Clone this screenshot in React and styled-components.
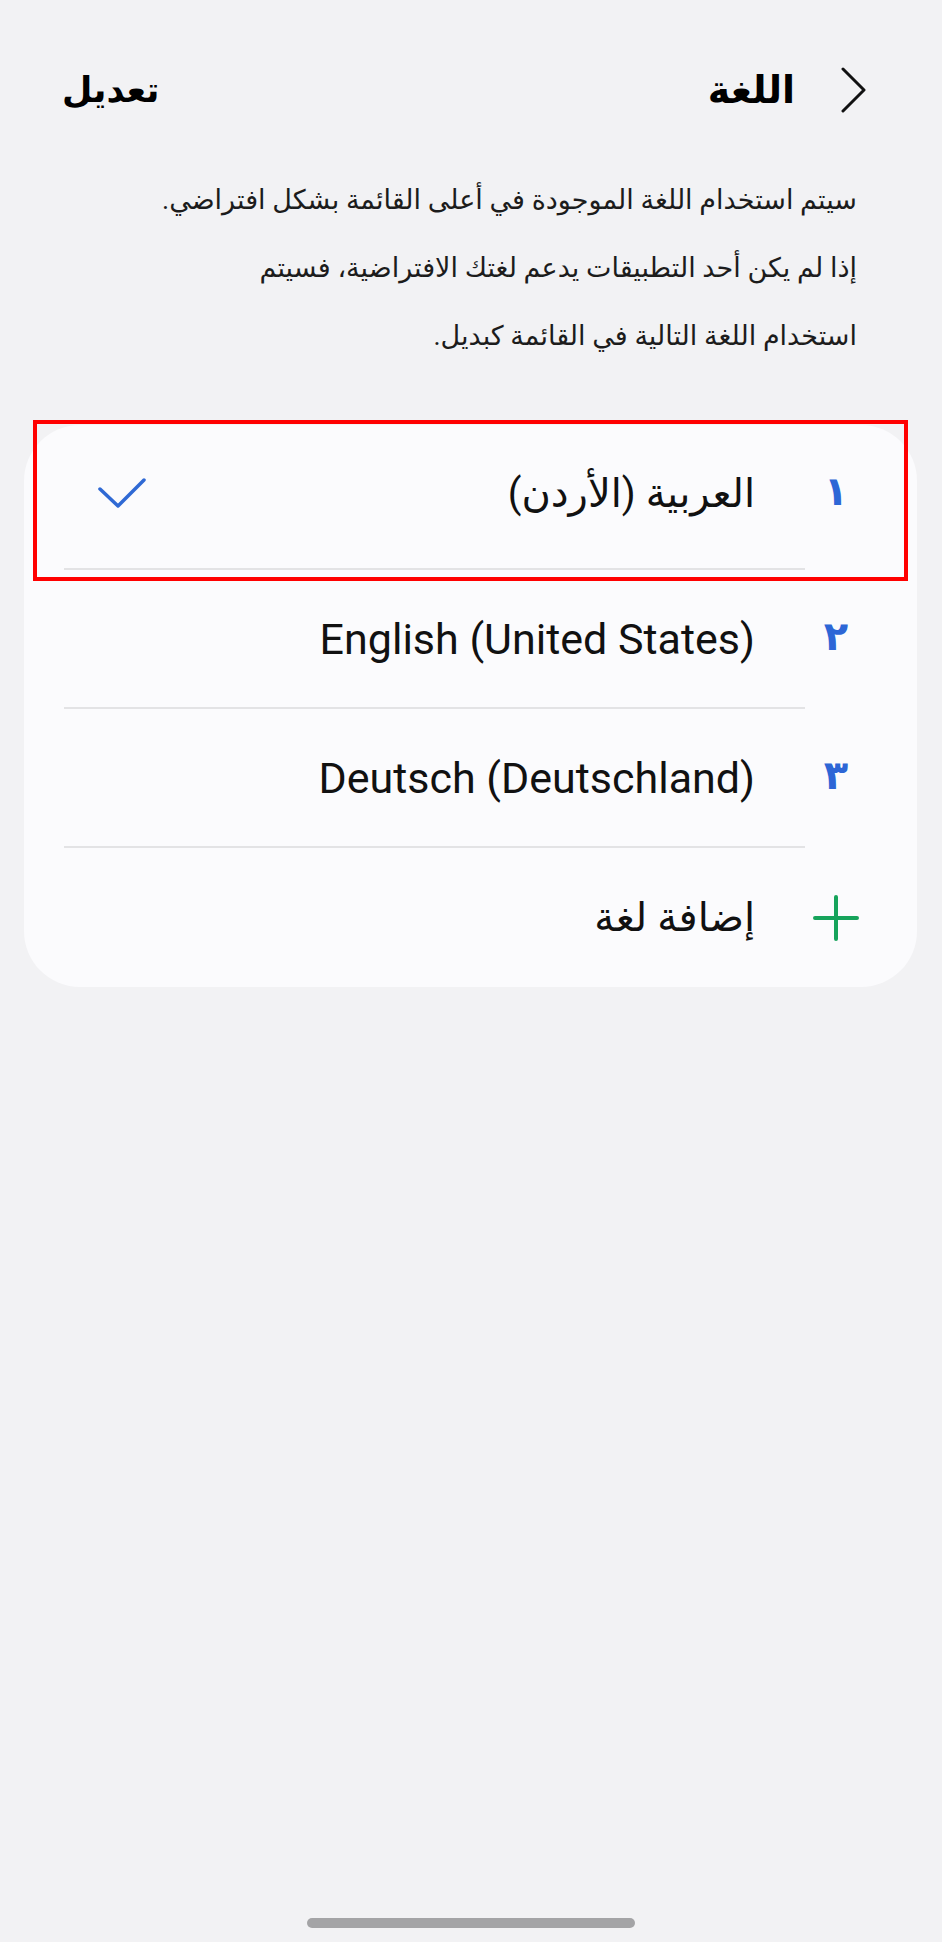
import React from 'react';
import styled, { createGlobalStyle } from 'styled-components';

const GlobalStyle = createGlobalStyle`
    html, body {
        margin: 0;
        padding: 0;
        background: #f2f2f4;
    }
    * {
        box-sizing: border-box;
    }
`;

const Screen = styled.div`
    direction: rtl;
    min-height: 1942px;
    display: flex;
    flex-direction: column;
    background: #f2f2f4;
    font-family: 'Roboto', 'DejaVu Sans', sans-serif;
    color: #111;
`;

const Header = styled.header`
    height: 166px;
    padding: 14px 75px 0 62px;
    display: flex;
    align-items: center;
`;

const BackButton = styled.button`
    border: none;
    background: none;
    padding: 0;
    margin-left: 46px;
    display: flex;
    cursor: pointer;
`;

const Title = styled.h1`
    margin: 0;
    font-size: 38px;
    font-weight: bold;
    color: #000;
    flex: 1;
`;

const EditButton = styled.button`
    border: none;
    background: none;
    padding: 0;
    font-family: inherit;
    font-size: 35px;
    font-weight: bold;
    color: #000;
    cursor: pointer;
`;

const Description = styled.div`
    padding: 0 85px 0 60px;
    font-size: 27px;
    line-height: 68px;
    color: #1c1c1c;
`;

const Line = styled.p`
    margin: 0;
    white-space: nowrap;
`;

const Card = styled.div`
    position: relative;
    margin: 55px 25px 0 24px;
    background: #fbfbfd;
    border-radius: 56px;
`;

const Highlight = styled.div`
    position: absolute;
    top: -5px;
    right: 9px;
    width: 875px;
    height: 161px;
    border: 4px solid #ff0000;
    pointer-events: none;
`;

const Row = styled.div`
    display: flex;
    align-items: stretch;
    height: ${({ $first }) => ($first ? '145px' : '139px')};
`;

const Lead = styled.div`
    width: 112px;
    padding-right: 51px;
    padding-bottom: ${({ $first }) => ($first ? '7px' : '0')};
    display: flex;
    align-items: center;
    justify-content: flex-start;
`;

const Index = styled.span`
    width: 60px;
    text-align: center;
    font-size: 40px;
    font-weight: bold;
    color: #2d66d6;
    margin-top: -6px;
`;

const Body = styled.div`
    flex: 1;
    margin-left: 40px;
    padding-right: 50px;
    padding-bottom: ${({ $first }) => ($first ? '7px' : '0')};
    display: flex;
    align-items: center;
    justify-content: space-between;
    border-bottom: ${({ $last }) => ($last ? 'none' : '2px solid #e3e3e5')};
`;

const Label = styled.span`
    font-size: ${({ $latin }) => ($latin ? '43px' : '40px')};
    color: #111;
`;

const IconSlot = styled.span`
    width: 60px;
    display: flex;
    justify-content: center;
`;

const CheckMark = styled.svg`
    margin-left: 34px;
    flex-shrink: 0;
`;

const HomeBar = styled.div`
    margin: auto auto 14px;
    width: 328px;
    height: 10px;
    border-radius: 5px;
    background: #a4a4a6;
`;

const languages = [
    { id: 1, num: '١', name: 'العربية (الأردن)', selected: true },
    { id: 2, num: '٢', name: 'English (United States)', latin: true },
    { id: 3, num: '٣', name: 'Deutsch (Deutschland)', latin: true },
];

export default function App() {
    return (
        <>
            <GlobalStyle />
            <Screen dir="rtl">
                <Header>
                    <BackButton aria-label="رجوع">
                        <svg width="26" height="46" viewBox="0 0 26 46" fill="none">
                            <path d="M2 2 L23 23 L2 44" stroke="#111" strokeWidth="3" strokeLinecap="round" strokeLinejoin="round" />
                        </svg>
                    </BackButton>
                    <Title>اللغة</Title>
                    <EditButton>تعديل</EditButton>
                </Header>

                <Description>
                    <Line>سيتم استخدام اللغة الموجودة في أعلى القائمة بشكل افتراضي.</Line>
                    <Line>إذا لم يكن أحد التطبيقات يدعم لغتك الافتراضية، فسيتم</Line>
                    <Line>استخدام اللغة التالية في القائمة كبديل.</Line>
                </Description>

                <Card>
                    {languages.map((lang, i) => (
                        <Row key={lang.id} $first={i === 0}>
                            <Lead $first={i === 0}>
                                <Index>{lang.num}</Index>
                            </Lead>
                            <Body $first={i === 0}>
                                <Label dir="auto" $latin={lang.latin}>{lang.name}</Label>
                                {lang.selected && (
                                    <CheckMark width="48" height="30" viewBox="0 0 48 30" fill="none">
                                        <path d="M2 11 L20 28 L46 2" stroke="#2f69d4" strokeWidth="3.5" strokeLinecap="round" strokeLinejoin="round" />
                                    </CheckMark>
                                )}
                            </Body>
                        </Row>
                    ))}
                    <Row>
                        <Lead>
                            <IconSlot>
                                <svg width="46" height="46" viewBox="0 0 46 46" fill="none">
                                    <path d="M23 2 V44 M2 23 H44" stroke="#16a35b" strokeWidth="4" strokeLinecap="round" />
                                </svg>
                            </IconSlot>
                        </Lead>
                        <Body $last>
                            <Label>إضافة لغة</Label>
                        </Body>
                    </Row>
                    <Highlight />
                </Card>

                <HomeBar />
            </Screen>
        </>
    );
}
